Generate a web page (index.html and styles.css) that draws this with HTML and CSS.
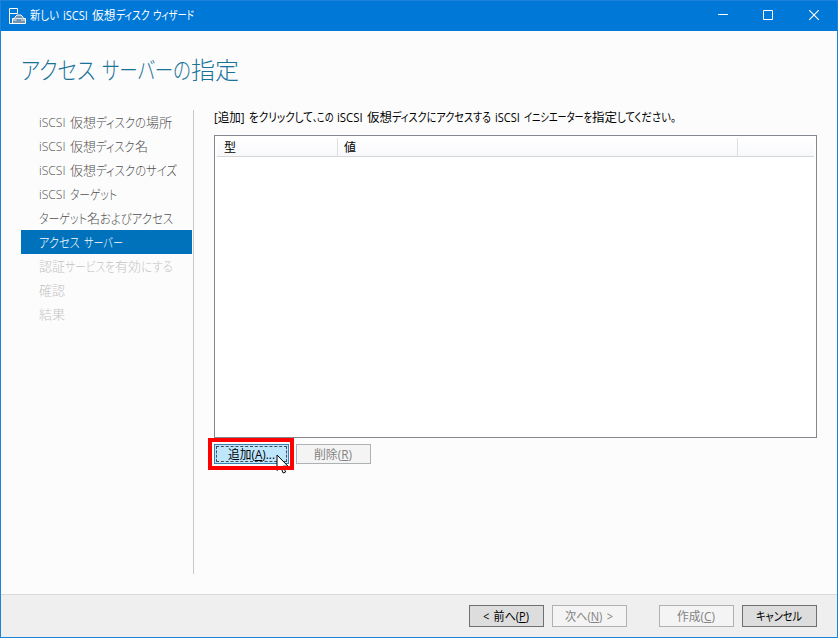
FILE: index.html
```html
<!DOCTYPE html>
<html lang="ja">
<head>
<meta charset="utf-8">
<title>新しい iSCSI 仮想ディスク ウィザード</title>
<link rel="stylesheet" href="styles.css">
</head>
<body>
<div class="window">
  <header class="titlebar">
    <svg class="app-icon" width="17" height="17" viewBox="0 0 17 17" fill="none" stroke="#fff">
      <path d="M4 15.500H.5V.5h8v5M.5 5.500h8"/>
      <path d="M3.500 15.500v-5h2.500v-1.500l2-2h4l2 2v1.500h2.500v5z" fill="#7294b0"/>
      <path d="M7 10.500h6M3.500 12h4M12 12h4.500" stroke-width=".8"/>
    </svg>
    <div class="label caption"><span data-w="33">新しい </span><span data-w="29">iSCSI </span><span data-w="23.500">仮想</span><span data-w="37.500">ディスク </span><span data-w="41">ウィザード</span></div>
    <div class="controls">
      <svg width="10" height="10" viewBox="0 0 10 10"><path d="M0 4.500h10" stroke="#fff"/></svg>
      <svg width="10" height="10" viewBox="0 0 10 10"><path d="M.5.5h9v9h-9z" fill="none" stroke="#fff"/></svg>
      <svg width="10" height="10" viewBox="0 0 10 10"><path d="M0 0l10 10M10 0L0 10" stroke="#fff" stroke-width="1.200"/></svg>
    </div>
  </header>

  <h1 class="label"><span data-w="81">アクセス </span><span data-w="89">サーバーの</span><span data-w="48">指定</span></h1>

  <div class="body">
    <nav class="steps">
      <div class="label step"><span data-w="31">iSCSI </span><span data-w="26">仮想</span><span data-w="50">ディスクの</span><span data-w="26">場所</span></div>
      <div class="label step"><span data-w="31">iSCSI </span><span data-w="26">仮想</span><span data-w="38.500">ディスク</span><span data-w="13">名</span></div>
      <div class="label step"><span data-w="31">iSCSI </span><span data-w="26">仮想</span><span data-w="81">ディスクのサイズ</span></div>
      <div class="label step"><span data-w="31">iSCSI </span><span data-w="47">ターゲット</span></div>
      <div class="label step"><span data-w="48">ターゲット</span><span data-w="13">名</span><span data-w="73">およびアクセス</span></div>
      <div class="label step current"><span data-w="45">アクセス </span><span data-w="39">サーバー</span></div>
      <div class="label step off"><span data-w="26">認証</span><span data-w="50">サービスを</span><span data-w="26">有効</span><span data-w="32">にする</span></div>
      <div class="label step off"><span data-w="26">確認</span></div>
      <div class="label step off"><span data-w="26">結果</span></div>
    </nav>

    <main class="content">
      <div class="label prompt"><span data-w="35">[追加] </span><span data-w="64">をクリックして</span><span class="wide" data-w="4">、</span><span data-w="20">この </span><span data-w="30">iSCSI </span><span data-w="25">仮想</span><span data-w="103">ディスクにアクセスする </span><span data-w="29">iSCSI </span><span data-w="68">イニシエーターを</span><span data-w="25">指定</span><span data-w="59">してください。</span></div>
      <div class="list">
        <div class="list-head">
          <div class="label col type"><span data-w="12">型</span></div>
          <div class="label col value"><span data-w="12">値</span></div>
          <div class="col rest"></div>
        </div>
      </div>
      <div class="actions">
        <button class="label btn hot"><span data-w="47">追加(<u>A</u>)...</span></button>
        <button class="label btn disabled"><span data-w="38">削除(<u>R</u>)</span></button>
        <svg class="cursor" width="13" height="20" viewBox="0 0 13 20"><path d="M1 1v15.500l3.600-3.500 2.600 6 2.400-1-2.600-5.800h5z" fill="#fff" stroke="#000"/></svg>
        <div class="marker"></div>
      </div>
    </main>
  </div>

  <footer class="footer">
    <button class="label btn"><span data-w="46">&lt; 前へ(<u>P</u>)</span></button>
    <button class="label btn disabled"><span data-w="48">次へ(<u>N</u>) &gt;</span></button>
    <button class="label btn disabled create"><span data-w="38">作成(<u>C</u>)</span></button>
    <button class="label btn"><span data-w="46">キャンセル</span></button>
  </footer>
</div>
<script src="fit.js"></script>
</body>
</html>
```
FILE: styles.css
```css
* { box-sizing: border-box; }

body {
  margin: 0;
  font-family: "Open Sans", "Noto Sans CJK JP", sans-serif;
  font-size: 12px;
  color: #000;
}

.window {
  width: 838px;
  height: 638px;
  display: flex;
  flex-direction: column;
  background: #fcfcfc;
  border: 1px solid #1c83d9;
}

.label {
  display: flex;
  align-items: center;
  line-height: 18px;
  font-feature-settings: "palt";
  word-spacing: 1.5px;
}

.label > span {
  display: block;
  flex: none;
  white-space: pre;
  transform-origin: 0 50%;
}

.label > .wide { margin-left: 0; }

u { text-underline-offset: 1px; text-decoration-thickness: 1px; }

.titlebar {
  flex: none;
  height: 30px;
  padding-left: 8px;
  display: flex;
  align-items: center;
  background: #0078d7;
  color: #fff;
}

.app-icon { flex: none; margin-right: 4px; }
.caption { padding-bottom: 1px; }

.controls {
  margin-left: auto;
  margin-right: 18px;
  padding-bottom: 2px;
  display: flex;
  gap: 36px;
}

.controls svg { display: block; }
.controls svg:first-child { margin-right: -1px; }

h1 {
  flex: none;
  height: 79px;
  margin: 0;
  padding: 0 0 2px 20px;
  font-family: "Open Sans", "Noto Sans CJK JP Light", "Noto Sans CJK JP", sans-serif;
  font-size: 24px;
  font-weight: 300;
  color: #1a7299;
}

.body { flex: 1; display: flex; }

.steps {
  width: 173px;
  height: 464px;
  margin-left: 20px;
  border-right: 1px solid #c8c8c8;
}

.step {
  width: 171px;
  height: 24px;
  padding: 0 0 1px 18px;
  font-size: 13px;
  font-weight: 300;
  color: #505050;
}

.step.current { background: #0072bc; color: #fff; }
.step.off { color: #c4c4c4; }

.content {
  width: 603px;
  margin-left: 20px;
}

.prompt { height: 16px; }

.list {
  height: 303px;
  margin-top: 9px;
  padding: 2px;
  border: 1px solid #828790;
  background: #fff;
}

.list-head {
  height: 19px;
  display: flex;
  background: linear-gradient(#fff, #f7f8fa);
  border-bottom: 1px solid #d5d5d5;
}

.col { border-right: 1px solid #dedfe1; padding: 2px 0 0 6px; }
.type { width: 121px; padding-left: 7px; }
.value { width: 400px; }
.rest { border: 0; }

.actions {
  position: relative;
  display: flex;
  gap: 7px;
  padding-top: 6px;
}

.btn {
  width: 75px;
  height: 22px;
  padding: 2px 1px 0 0;
  justify-content: center;
  font-family: inherit;
  font-size: 12px;
  color: #000;
  background: #ddd;
  border: 1px solid #707070;
}

.btn.disabled {
  color: #838383;
  background: #f4f4f4;
  border-color: #adb2b5;
}

.actions .btn { height: 20px; }

.btn.hot {
  background: #bee6fd;
  border-color: #3c7fb1;
  outline: 1px dashed #3f4f59;
  outline-offset: -3px;
}

.marker {
  position: absolute;
  left: -6px;
  top: 0;
  width: 86px;
  height: 32px;
  border: 4px solid #f00;
}

.cursor { position: absolute; left: 62px; top: 16px; }

.footer {
  flex: none;
  height: 43px;
  padding: 10px 20px 0 0;
  display: flex;
  justify-content: flex-end;
  gap: 8px;
  background: #efefef;
  border-top: 1px solid #dadada;
}

.create { margin-left: 24px; }
```
FILE: fit.js
```js
// Condense each text run to its designed advance width.
document.querySelectorAll("[data-w]").forEach(function (run) {
  var target = parseFloat(run.dataset.w);
  var natural = run.getBoundingClientRect().width;
  run.style.transform = "scaleX(" + target / natural + ")";
  run.style.marginRight = target - natural + "px";
});
```
